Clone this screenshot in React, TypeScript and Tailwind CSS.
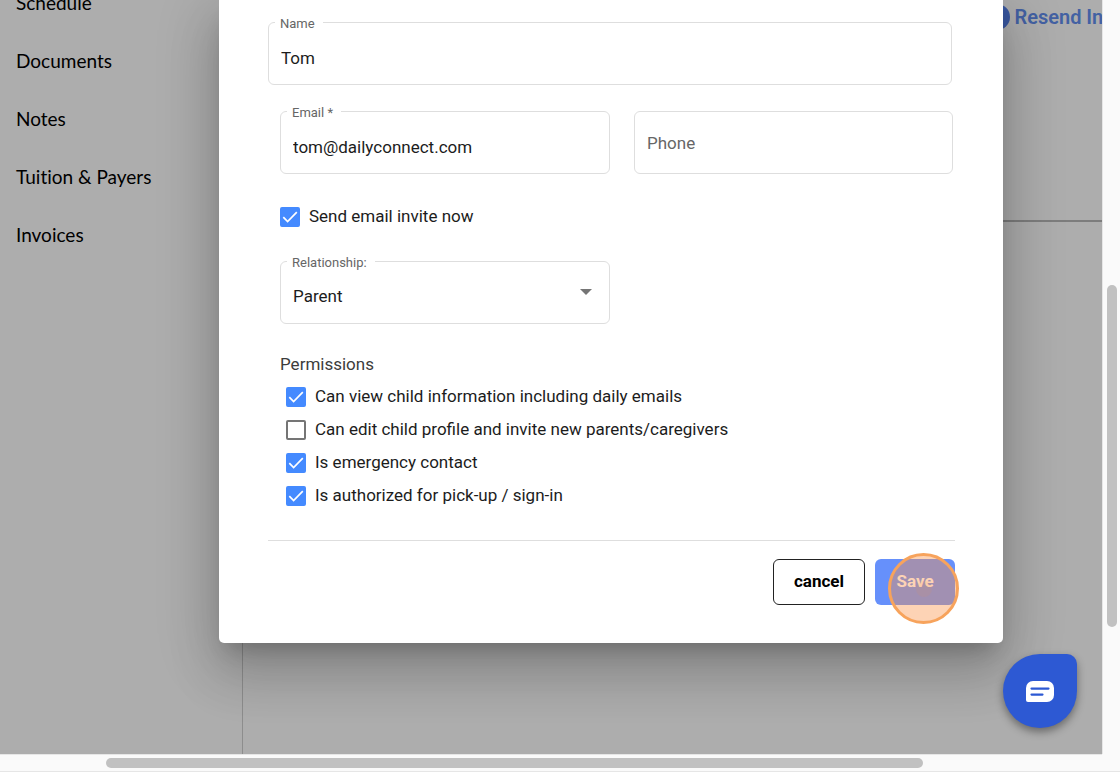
import { useId, useState, type InputHTMLAttributes, type ReactNode } from "react";

const NAV_ITEMS = ["Schedule", "Documents", "Notes", "Tuition & Payers", "Invoices"];

const PERMISSIONS = [
  { id: "view", label: "Can view child information including daily emails", checked: true },
  { id: "edit", label: "Can edit child profile and invite new parents/caregivers", checked: false },
  { id: "emergency", label: "Is emergency contact", checked: true },
  { id: "pickup", label: "Is authorized for pick-up / sign-in", checked: true },
];

function Outlined({ id, label, children }: { id: string; label: string; children: ReactNode }) {
  return (
    <div className="relative">
      {children}
      <label
        htmlFor={id}
        className="absolute -top-2 left-[7px] bg-white pl-[5px] pr-2 text-[13px] leading-5 text-[#666]"
      >
        {label}
      </label>
    </div>
  );
}

function TextField({ label, ...rest }: { label: string } & InputHTMLAttributes<HTMLInputElement>) {
  const id = useId();
  return (
    <Outlined id={id} label={label}>
      <input
        id={id}
        className="block h-[63px] w-full rounded-md border border-[#dedede] bg-white px-3 pt-2 text-[17px] text-[#1c1c1c] outline-none focus:border-[#448aff]"
        {...rest}
      />
    </Outlined>
  );
}

function Checkbox({ label, defaultChecked }: { label: string; defaultChecked: boolean }) {
  const [checked, setChecked] = useState(defaultChecked);
  return (
    <label className="flex h-[33px] cursor-pointer items-center gap-[9px] text-[17px] text-[#1c1c1c]">
      <span className="grid size-5 shrink-0">
        <input
          type="checkbox"
          checked={checked}
          onChange={(e) => setChecked(e.target.checked)}
          className="col-start-1 row-start-1 size-5 appearance-none rounded-xs border-2 border-[#757575] checked:border-[#448aff] checked:bg-[#448aff]"
        />
        {checked && (
          <svg
            viewBox="0 0 20 20"
            className="pointer-events-none col-start-1 row-start-1 size-5"
            fill="none"
            stroke="#fff"
            strokeWidth="1.7"
            aria-hidden="true"
          >
            <path d="M3.3 10.2 7.6 14.5 16.8 5.2" />
          </svg>
        )}
      </span>
      {label}
    </label>
  );
}

function CaregiverForm() {
  return (
    <form
      onSubmit={(e) => e.preventDefault()}
      className="ml-[219px] mr-[99px] flex-1 rounded-b-[5px] bg-white pb-[38px] pl-[49px] pr-12 pt-[22px] shadow-[0_14px_20px_-9px_rgba(0,0,0,0.2),0_31px_50px_4px_rgba(0,0,0,0.14),0_12px_60px_10px_rgba(0,0,0,0.12)]"
    >
      <div className="pr-[3px]">
        <TextField label="Name" defaultValue="Tom" />
      </div>

      <div className="pl-3 pr-[2px]">
        <div className="mt-[26px] grid grid-cols-[330fr_319fr] gap-6">
          <TextField label="Email *" type="email" defaultValue="tom@dailyconnect.com" />
          <input
            type="tel"
            aria-label="Phone"
            placeholder="Phone"
            className="block h-[63px] w-full rounded-md border border-[#dedede] bg-white px-3 text-[17px] text-[#1c1c1c] outline-none placeholder:text-[#666] focus:border-[#448aff]"
          />
        </div>

        <div className="mt-[26px]">
          <Checkbox label="Send email invite now" defaultChecked />
        </div>

        <div className="mt-7 grid grid-cols-[330fr_319fr] gap-6">
          <Outlined id="relationship" label="Relationship:">
            <select
              id="relationship"
              className="block h-[63px] w-full appearance-none rounded-md border border-[#dedede] bg-white px-3 pt-2 text-[17px] text-[#1c1c1c] outline-none"
            >
              <option>Parent</option>
              <option>Guardian</option>
              <option>Caregiver</option>
            </select>
            <svg
              viewBox="0 0 12 6"
              className="pointer-events-none absolute right-[18px] top-7 h-[6px] w-3"
              fill="#757575"
              aria-hidden="true"
            >
              <path d="M0 0h12L6 6z" />
            </svg>
          </Outlined>
        </div>

        <fieldset className="mt-6">
          <legend className="text-[17px] leading-8 text-[#3c3c3c]">Permissions</legend>
          <div className="pl-[6px]">
            {PERMISSIONS.map((p) => (
              <Checkbox key={p.id} label={p.label} defaultChecked={p.checked} />
            ))}
          </div>
        </fieldset>
      </div>

      <div className="mt-7 flex justify-end gap-[10px] border-t border-[#dedede] pt-[18px] text-[17px] font-bold">
        <button type="button" className="h-[46px] w-[92px] rounded-md border border-[#222] bg-white text-black">
          cancel
        </button>
        <div className="relative">
          <button type="submit" className="h-[46px] w-20 rounded-md bg-[#6690fb] text-white">
            Save
          </button>
          <span className="pointer-events-none absolute -right-1 -top-[6px] flex size-[71px] items-center justify-center rounded-full border-[3px] border-[#f7a35c] bg-[#fa9146]/40">
            <span className="size-4 rounded-full bg-[#fa9146]/10" />
          </span>
        </div>
      </div>
    </form>
  );
}

export default function App() {
  return (
    <div className="grid h-screen grid-cols-[minmax(0,1fr)_18px] grid-rows-[minmax(0,1fr)_18px] overflow-hidden bg-[#fafafa] font-[Roboto,sans-serif]">
      <main className="relative flex overflow-hidden bg-white">
        <nav className="w-[243px] shrink-0 border-r border-[#d0d0d0]">
          <ul className="-mt-[26px] font-[Lato,sans-serif] text-[19px] text-black [font-variant-ligatures:none]">
            {NAV_ITEMS.map((item) => (
              <li key={item}>
                <a href="#" className="flex h-[58px] items-center pl-4">
                  {item}
                </a>
              </li>
            ))}
          </ul>
        </nav>

        <section className="min-w-0 flex-1">
          <div className="flex h-[222px] items-start justify-end border-b-2 border-[#b8b8b8] pt-1">
            <a
              href="#"
              className="-mr-[34px] flex items-center gap-1 whitespace-nowrap text-xl leading-[26px] font-semibold text-[#648ff0]"
            >
              <span className="size-[26px] rounded-full bg-[#5580ea]" />
              Resend Invite
            </a>
          </div>
        </section>

        <div className="absolute inset-0 flex items-start bg-black/32">
          <CaregiverForm />
        </div>

        <button
          type="button"
          aria-label="Open chat"
          className="absolute bottom-[26px] right-[25px] flex size-[74px] items-center justify-center rounded-[37px] rounded-tr-[10px] bg-[#2d59d3] shadow-[0_4px_8px_rgba(0,0,0,0.4)]"
        >
          <svg viewBox="0 0 28 21" className="h-[21px] w-7" aria-hidden="true">
            <path fill="#fff" d="M7 0h14a7 7 0 0 1 7 7v7a7 7 0 0 1-7 7H2a2 2 0 0 1-2-2V7a7 7 0 0 1 7-7z" />
            <path stroke="#2d59d3" strokeWidth="2.2" strokeLinecap="round" d="M5.500 7.600h17M5.500 13.600h11" />
          </svg>
        </button>
      </main>

      <div className="flex flex-col items-center border-l border-[#e6e6e6]" aria-hidden="true">
        <span className="flex-[285]" />
        <span className="w-[10px] flex-[342] rounded-full bg-[#c1c1c1]" />
        <span className="flex-[127]" />
      </div>
      <div className="flex items-center border-y border-[#e6e6e6]" aria-hidden="true">
        <span className="flex-[106]" />
        <span className="h-[10px] flex-[817] rounded-full bg-[#c1c1c1]" />
        <span className="flex-[179]" />
      </div>
      <div className="border-b border-[#e6e6e6]" />
    </div>
  );
}
